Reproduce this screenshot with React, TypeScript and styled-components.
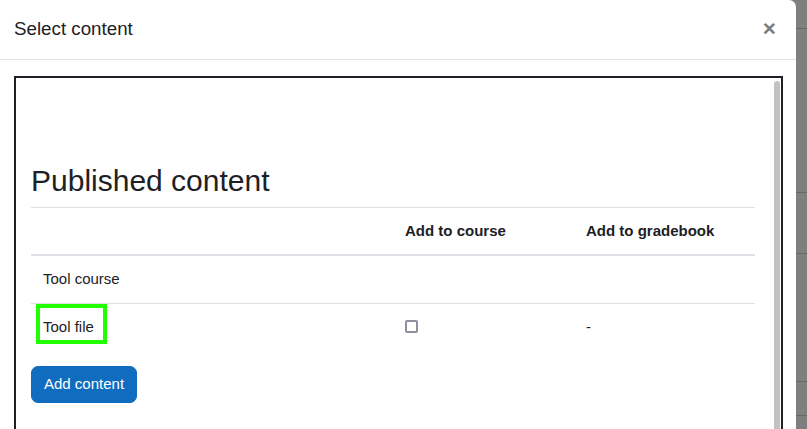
import React from "react";
import styled, { createGlobalStyle } from "styled-components";

const Global = createGlobalStyle`
  html, body { margin: 0; padding: 0; }
  body {
    background: #7f7f7f;
    font-family: "Liberation Sans", Arial, sans-serif;
    color: #1d2125;
    overflow: hidden;
  }
`;

const Page = styled.div`
  display: flex;
  width: 807px;
  height: 429px;
  overflow: hidden;
`;

const Modal = styled.div`
  width: 796px;
  flex: none;
  background: #fff;
  border-top-right-radius: 7px;
  display: flex;
  flex-direction: column;
`;

const Header = styled.div`
  height: 59px;
  border-bottom: 1px solid #dee2e6;
  display: flex;
  align-items: center;
  justify-content: space-between;
  padding: 0 20px 0 14px;
`;

const Title = styled.h5`
  margin: 0;
  font-size: 18.75px;
  font-weight: 400;
  line-height: 1.2;
`;

const Close = styled.button`
  border: 0;
  background: none;
  padding: 0;
  font-family: "Liberation Sans", Arial, sans-serif;
  font-size: 22.5px;
  font-weight: 700;
  line-height: 1;
  color: #7a7d80;
  cursor: pointer;
`;

const Body = styled.div`
  padding: 16px 13px 0 14px;
  flex: 1;
  display: flex;
  min-height: 0;
`;

const Frame = styled.div`
  flex: 1;
  border: 2px solid #1d2125;
  border-bottom: 0;
  display: flex;
`;

const Content = styled.div`
  flex: 1;
  padding: 85px 15px 0 15px;
`;

const Scrollbar = styled.div`
  width: 11px;
  flex: none;
  padding-top: 3px;
  display: flex;
  justify-content: center;
`;

const Thumb = styled.div`
  width: 6px;
  height: 600px;
  margin-left: 2px;
  border-radius: 3px;
  background: #c1c1c1;
`;

const Heading = styled.h2`
  margin: 0 0 7.5px;
  font-size: 30px;
  font-weight: 400;
  line-height: 1.2;
`;

const Table = styled.table`
  width: 100%;
  border-collapse: collapse;
  font-size: 15px;
  line-height: 1.5;
`;

const Th = styled.th<{ $w?: string }>`
  text-align: left;
  font-weight: 700;
  padding: 12px;
  width: ${(p) => p.$w || "auto"};
  border-top: 1px solid #dee2e6;
  border-bottom: 2px solid #dee2e6;
`;

const Td = styled.td<{ $last?: boolean }>`
  padding: 12px;
  vertical-align: middle;
  border-bottom: ${(p) => (p.$last ? "0" : "1px solid #dee2e6")};
`;

const Highlight = styled.span`
  display: inline-block;
  padding: 8px 9px 2px 3px;
  margin: -8px -9px -2px -3px;
  outline: 4px solid #22ff00;
`;

const Check = styled.span`
  display: inline-block;
  width: 13px;
  height: 13px;
  box-sizing: border-box;
  border: 2px solid #8f8f9d;
  border-radius: 2px;
  vertical-align: -1px;
`;

const Button = styled.button`
  margin-top: 16px;
  background: #0f6cbf;
  color: #fff;
  border: 1px solid #0f6cbf;
  border-radius: 7px;
  padding: 6px 12px;
  font-family: "Liberation Sans", Arial, sans-serif;
  font-size: 15px;
  line-height: 1.5;
  cursor: pointer;
`;

const Backdrop = styled.div`
  flex: 1;
  display: flex;
  flex-direction: column;
  background: #7f7f7f;
`;

const Band = styled.div<{ $h: number }>`
  height: ${(p) => p.$h}px;
  flex: none;
  border-bottom: 1px solid #686868;
`;

export default function App() {
  return (
    <Page>
      <Global />
      <Modal>
        <Header>
          <Title>Select content</Title>
          <Close aria-label="Close">×</Close>
        </Header>
        <Body>
          <Frame>
            <Content>
              <Heading>Published content</Heading>
              <Table>
                <thead>
                  <tr>
                    <Th $w="50%"></Th>
                    <Th $w="25%">Add to course</Th>
                    <Th $w="25%">Add to gradebook</Th>
                  </tr>
                </thead>
                <tbody>
                  <tr>
                    <Td>Tool course</Td>
                    <Td></Td>
                    <Td></Td>
                  </tr>
                  <tr>
                    <Td $last>
                      <Highlight>Tool file</Highlight>
                    </Td>
                    <Td $last>
                      <Check />
                    </Td>
                    <Td $last>-</Td>
                  </tr>
                </tbody>
              </Table>
              <Button>Add content</Button>
            </Content>
            <Scrollbar>
              <Thumb />
            </Scrollbar>
          </Frame>
        </Body>
      </Modal>
      <Backdrop>
        <Band $h={28} />
        <Band $h={163} />
        <Band $h={60} />
        <Band $h={127} />
        <Band $h={33} />
      </Backdrop>
    </Page>
  );
}
